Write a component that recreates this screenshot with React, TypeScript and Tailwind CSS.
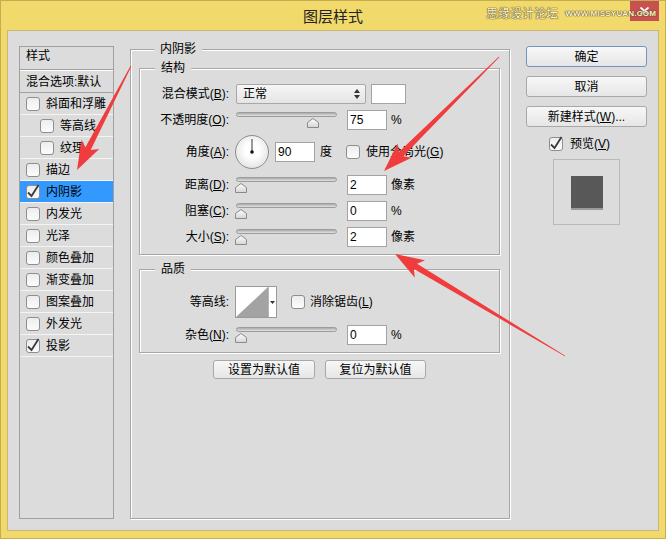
import React from 'react';

const FONT = "font-['Liberation_Sans','Noto_Sans_CJK_SC',sans-serif]";

const Key = ({ k }: { k: string }) => (
  <span>
    (<span className="underline underline-offset-1">{k}</span>)
  </span>
);

const Check = ({ checked }: { checked?: boolean }) => (
  <span className="flex h-[14px] w-[14px] shrink-0 items-center justify-center rounded-[3px] border border-[#8e8e8e] bg-gradient-to-b from-[#ededed] to-[#fcfcfc]">
    {checked && (
      <svg width="12" height="12" viewBox="0 0 12 12" className="overflow-visible">
        <path d="M1 6.5 L4.5 10 L11.5 -1" fill="none" stroke="#3a3a3a" strokeWidth="1.8" />
      </svg>
    )}
  </span>
);

const Slider = ({ thumb }: { thumb: string }) => (
  <div className="relative h-[20px] w-[101px] shrink-0">
    <div className="mt-[4px] h-[5px] rounded-full border border-[#9c9c9c] bg-gradient-to-b from-[#ababab] to-[#e2e2e2]" />
    <svg className={`absolute top-[6px] ${thumb}`} width="12" height="10" viewBox="0 0 12 10">
      <defs>
        <linearGradient id="th" x1="0" y1="0" x2="0" y2="1">
          <stop offset="0" stopColor="#ffffff" />
          <stop offset="1" stopColor="#d4d4d4" />
        </linearGradient>
      </defs>
      <polygon points="6,0.5 11.5,4.5 11.5,9.5 0.5,9.5 0.5,4.5" fill="url(#th)" stroke="#8a8a8a" />
    </svg>
  </div>
);

const Field = ({ value }: { value: string }) => (
  <div className="flex h-[20px] w-[40px] shrink-0 items-center border border-[#a3a3a3] bg-white pl-[2px] text-[12px] leading-none">
    {value}
  </div>
);

const Btn = ({ children, cls = '', primary = false }: { children: React.ReactNode; cls?: string; primary?: boolean }) => (
  <div
    className={`flex items-center justify-center rounded-[3px] border bg-gradient-to-b from-[#f7f7f7] to-[#e6e6e6] text-[12px] leading-none ${
      primary ? 'border-[#6f95c0]' : 'border-[#a8a8a8]'
    } ${cls}`}
  >
    {children}
  </div>
);

const Group = ({ title, children, cls = '' }: { title: string; children: React.ReactNode; cls?: string }) => (
  <div className={`flex flex-col border border-[#a6a6a6] [box-shadow:inset_1px_1px_0_#fff,1px_1px_0_#fff] ${cls}`}>
    <span className="-mt-[9px] ml-[15px] self-start bg-[#dcdcdc] px-[6px] text-[12px] leading-[16px]">{title}</span>
    {children}
  </div>
);

const Label = ({ children }: { children: React.ReactNode }) => (
  <div className="w-[89px] shrink-0 text-right text-[12px] leading-[16px]">{children}</div>
);

const styles: { name: string; checked?: boolean; sub?: boolean; active?: boolean }[] = [
  { name: '斜面和浮雕' },
  { name: '等高线', sub: true },
  { name: '纹理', sub: true },
  { name: '描边' },
  { name: '内阴影', checked: true, active: true },
  { name: '内发光' },
  { name: '光泽' },
  { name: '颜色叠加' },
  { name: '渐变叠加' },
  { name: '图案叠加' },
  { name: '外发光' },
  { name: '投影', checked: true },
];

function arrow(x1: number, y1: number, x2: number, y2: number, hl = 24, hw = 10, sw = 3) {
  const dx = x2 - x1;
  const dy = y2 - y1;
  const L = Math.hypot(dx, dy);
  const ux = dx / L;
  const uy = dy / L;
  const px = -uy;
  const py = ux;
  const bx = x2 - ux * hl;
  const by = y2 - uy * hl;
  const cx = x2 - ux * (hl + 5);
  const cy = y2 - uy * (hl + 5);
  const pts = [
    [x1 + px * 0.4, y1 + py * 0.4],
    [bx + px * sw, by + py * sw],
    [cx + px * hw, cy + py * hw],
    [x2, y2],
    [cx - px * hw, cy - py * hw],
    [bx - px * sw, by - py * sw],
    [x1 - px * 0.4, y1 - py * 0.4],
  ];
  return pts.map((p) => p.map((n) => n.toFixed(1)).join(',')).join(' ');
}

export default function App() {
  return (
    <div className={`relative flex h-[539px] w-[666px] flex-col border border-[#c5ad51] bg-[#f1d96b] text-black ${FONT}`}>
      {/* title bar */}
      <div className="grid h-[29px] shrink-0 grid-cols-[1fr_auto_1fr]">
        <div />
        <div className="self-center pt-[2px] text-[15px] leading-[20px] text-[#222]">图层样式</div>
        <div className="mr-[6px] flex h-[20px] w-[29px] items-center justify-center self-start justify-self-end bg-[#c75050]">
          <svg width="9" height="8" viewBox="0 0 9 8">
            <path d="M0.5 0.5 L8.5 7.5 M8.5 0.5 L0.5 7.5" stroke="#fff" strokeWidth="1.8" />
          </svg>
        </div>
      </div>

      {/* body */}
      <div className="mx-[6px] mb-[7px] flex flex-1 items-start border border-[#c9b87a] bg-[#dcdcdc]">
        {/* style list */}
        <div className="ml-[11px] mt-[15px] flex h-[473px] w-[95px] shrink-0 flex-col border border-[#a0a0a0] text-[12px] leading-[16px]">
          <div className="h-[22px] pl-[6px] pt-[1px]">样式</div>
          <div className="h-px bg-[#a0a0a0]" />
          <div className="h-px bg-white" />
          <div className="flex h-[21px] items-center pl-[6px]">混合选项:默认</div>
          <div className="h-px bg-[#a0a0a0]" />
          {styles.map((s) => (
            <React.Fragment key={s.name}>
              <div className={`flex h-[21px] items-center ${s.sub ? 'pl-[20px]' : 'pl-[6px]'} ${s.active ? 'bg-[#3399ff]' : ''}`}>
                <Check checked={s.checked} />
                <span className="ml-[6px]">{s.name}</span>
              </div>
              <div className="h-px bg-[#f4f4f4]" />
            </React.Fragment>
          ))}
        </div>

        {/* main group */}
        <div className="ml-[16px] mt-[18px] h-[470px] w-[380px] shrink-0">
          <Group title="内阴影" cls="h-full pl-[8px] pr-[9px]">
            <Group title="结构" cls="mt-[11px] pb-[7px]">
              <div className="mt-[8px] flex h-[20px] items-center">
                <Label>
                  混合模式<Key k="B" />:
                </Label>
                <div className="ml-[7px] flex h-[20px] w-[130px] items-center justify-between rounded-[2px] border border-[#a8a8a8] bg-gradient-to-b from-[#f6f6f6] to-[#e4e4e4] pl-[6px] pr-[5px] text-[12px]">
                  <span>正常</span>
                  <svg width="6" height="10" viewBox="0 0 6 10">
                    <polygon points="3,0 6,4 0,4" fill="#333" />
                    <polygon points="0,6 6,6 3,10" fill="#333" />
                  </svg>
                </div>
                <div className="ml-[5px] h-[20px] w-[35px] border border-[#a3a3a3] bg-white" />
              </div>

              <div className="mt-[6px] flex h-[20px] items-center">
                <Label>
                  不透明度<Key k="O" />:
                </Label>
                <div className="ml-[7px]">
                  <Slider thumb="left-[71px]" />
                </div>
                <div className="ml-[10px]">
                  <Field value="75" />
                </div>
                <span className="ml-[4px] text-[12px]">%</span>
              </div>

              <div className="mt-[5px] flex h-[34px] items-center">
                <Label>
                  角度<Key k="A" />:
                </Label>
                <div className="ml-[6px] h-[34px] w-[34px] shrink-0 rounded-full border border-[#8c8c8c] bg-[radial-gradient(circle_at_50%_45%,#ffffff_30%,#d6d6d6)]">
                  <svg width="32" height="32" viewBox="0 0 32 32">
                    <line x1="16" y1="16" x2="16" y2="3" stroke="#555" strokeWidth="1.2" />
                    <circle cx="16" cy="16" r="1.8" fill="#111" />
                  </svg>
                </div>
                <div className="ml-[6px]">
                  <Field value="90" />
                </div>
                <span className="ml-[5px] text-[12px]">度</span>
                <div className="ml-[14px]">
                  <Check />
                </div>
                <span className="ml-[6px] whitespace-nowrap text-[12px]">
                  使用全局光<Key k="G" />
                </span>
              </div>

              {[
                { l: '距离', k: 'D', v: '2', u: '像素' },
                { l: '阻塞', k: 'C', v: '0', u: '%' },
                { l: '大小', k: 'S', v: '2', u: '像素' },
              ].map((r) => (
                <div key={r.l} className="mt-[6px] flex h-[20px] items-center">
                  <Label>
                    {r.l}
                    <Key k={r.k} />:
                  </Label>
                  <div className="ml-[7px]">
                    <Slider thumb="left-[-1px]" />
                  </div>
                  <div className="ml-[10px]">
                    <Field value={r.v} />
                  </div>
                  <span className="ml-[4px] text-[12px]">{r.u}</span>
                </div>
              ))}
            </Group>

            <Group title="品质" cls="mt-[14px] pb-[7px]">
              <div className="mt-[9px] flex h-[32px] items-center">
                <Label>等高线:</Label>
                <div className="ml-[6px] flex h-[32px] w-[42px] shrink-0 border border-[#9a9a9a] bg-white">
                  <svg width="32" height="30" viewBox="0 0 32 30" className="shrink-0">
                    <polygon points="0,30 32,0 32,30" fill="#a3a3a3" />
                  </svg>
                  <div className="flex flex-1 items-center justify-center border-l border-[#b5b5b5]">
                    <svg width="5" height="3" viewBox="0 0 5 3">
                      <polygon points="0,0 5,0 2.5,3" fill="#333" />
                    </svg>
                  </div>
                </div>
                <div className="ml-[14px]">
                  <Check />
                </div>
                <span className="ml-[5px] text-[12px]">
                  消除锯齿<Key k="L" />
                </span>
              </div>
              <div className="mt-[7px] flex h-[20px] items-center">
                <Label>
                  杂色<Key k="N" />:
                </Label>
                <div className="ml-[7px]">
                  <Slider thumb="left-[-1px]" />
                </div>
                <div className="ml-[10px]">
                  <Field value="0" />
                </div>
                <span className="ml-[4px] text-[12px]">%</span>
              </div>
            </Group>

            <div className="ml-[74px] mt-[7px] flex gap-[10px]">
              <Btn cls="h-[19px] w-[102px]">设置为默认值</Btn>
              <Btn cls="h-[19px] w-[101px]">复位为默认值</Btn>
            </div>
          </Group>
        </div>

        {/* right column */}
        <div className="ml-[16px] mt-[15px] flex w-[121px] shrink-0 flex-col">
          <Btn primary cls="h-[21px]">确定</Btn>
          <Btn cls="mt-[9px] h-[21px]">取消</Btn>
          <Btn cls="mt-[9px] h-[21px]">
            新建样式<Key k="W" />...
          </Btn>
          <div className="ml-[23px] mt-[10px] flex h-[14px] items-center text-[12px]">
            <Check checked />
            <span className="ml-[7px]">
              预览<Key k="V" />
            </span>
          </div>
          <div className="ml-[27px] mt-[8px] flex h-[66px] w-[67px] items-center justify-center border border-[#b9b9b9]">
            <div className="h-[32px] w-[32px] bg-[#585858] [box-shadow:0_2px_0_#9a9a9a]" />
          </div>
        </div>
      </div>

      {/* watermark */}
      <div className="pointer-events-none absolute right-[9px] top-[5px] flex items-center gap-[7px] text-[#fff7cf] [text-shadow:0_0_1px_#5a4a20,0_0_1px_#5a4a20,0_0_1px_#5a4a20]">
        <span className="text-[12px] leading-[16px]">思缘设计论坛</span>
        <span className="text-[8px] font-bold leading-[10px] tracking-[0.2px]">WWW.MISSYUAN.COM</span>
      </div>

      {/* annotation arrows */}
      <svg className="pointer-events-none absolute left-[-1px] top-[-1px]" width="666" height="539">
        <polygon points={arrow(131, 66, 77, 170)} fill="#f03c3c" />
        <polygon points={arrow(499, 57, 384, 171)} fill="#f03c3c" />
        <polygon points={arrow(565, 356, 395, 254)} fill="#f03c3c" />
      </svg>
    </div>
  );
}
